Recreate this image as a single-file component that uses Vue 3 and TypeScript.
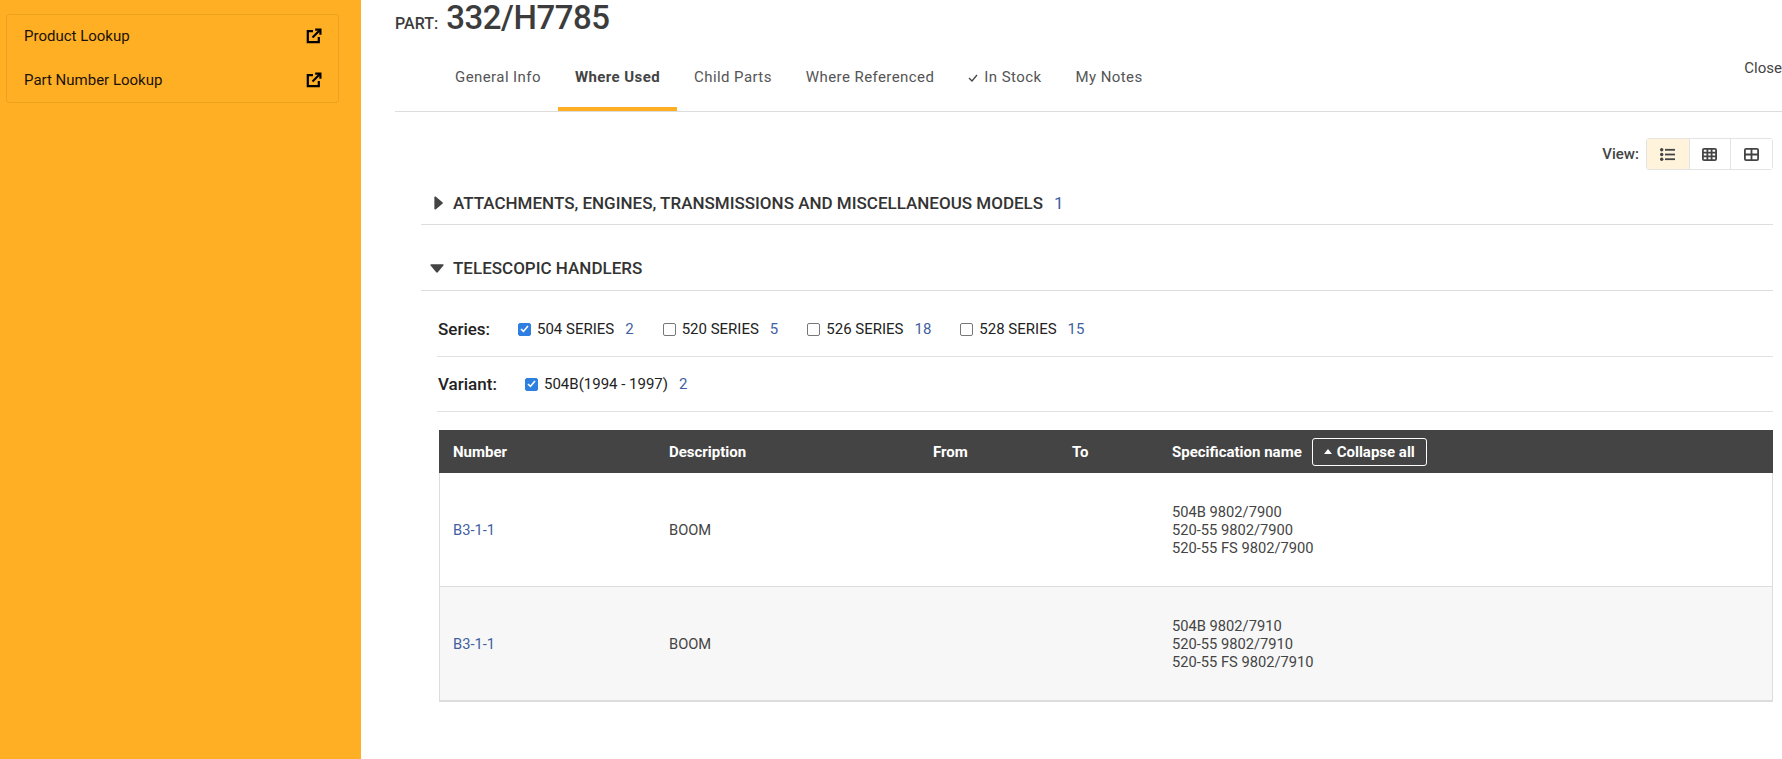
<script setup lang="ts">
interface Filter { label: string; count: number; checked: boolean }
const tabs = ['General Info', 'Where Used', 'Child Parts', 'Where Referenced', 'In Stock', 'My Notes']
const series: Filter[] = [
  { label: '504 SERIES', count: 2, checked: true },
  { label: '520 SERIES', count: 5, checked: false },
  { label: '526 SERIES', count: 18, checked: false },
  { label: '528 SERIES', count: 15, checked: false },
]
const rows = [
  { number: 'B3-1-1', description: 'BOOM', specs: ['504B 9802/7900', '520-55 9802/7900', '520-55 FS 9802/7900'] },
  { number: 'B3-1-1', description: 'BOOM', specs: ['504B 9802/7910', '520-55 9802/7910', '520-55 FS 9802/7910'] },
]
</script>

<template>
  <div class="page">
    <aside class="sidebar">
      <div class="card">
        <div v-for="name in ['Product Lookup', 'Part Number Lookup']" :key="name" class="side-item">
          <span>{{ name }}</span>
          <svg width="16" height="16" viewBox="0 0 16 16" fill="none" stroke="#000" stroke-width="2.2">
            <path d="M7 3.2H1.8v11h11V9" />
            <path d="M6.5 9.5 14 2" />
            <path d="M9.2 1.6h5.2v5.2" />
          </svg>
        </div>
      </div>
    </aside>
    <main class="main">
      <h1 class="title"><span class="part">PART:</span> <span class="number">332/H7785</span></h1>
      <div class="tabs">
        <a v-for="t in tabs" :key="t" class="tab" :class="{ active: t === 'Where Used' }">
          <svg v-if="t === 'In Stock'" class="tick" width="10" height="8" viewBox="0 0 10 8" fill="none" stroke="#444" stroke-width="1.3"><path d="M1 4l3 3 5-6" /></svg>{{ t }}
        </a>
        <span class="close">Close</span>
      </div>
      <div class="view">
        <span class="view-label">View:</span>
        <div class="view-group">
          <button class="view-btn on">
            <svg width="15" height="13" viewBox="0 0 15 13" fill="#444"><circle cx="1.7" cy="1.8" r="1.7" /><circle cx="1.7" cy="6.5" r="1.7" /><circle cx="1.7" cy="11.2" r="1.7" /><rect x="5" y=".9" width="10" height="1.8" /><rect x="5" y="5.6" width="10" height="1.8" /><rect x="5" y="10.3" width="10" height="1.8" /></svg>
          </button>
          <button class="view-btn">
            <svg width="15" height="13" viewBox="0 0 15 13" fill="none" stroke="#444" stroke-width="1.8"><rect x=".9" y=".9" width="13.2" height="11.2" rx="1.2" /><path d="M5.4 1v11M9.6 1v11M1 4.6h13M1 8.4h13" /></svg>
          </button>
          <button class="view-btn">
            <svg width="15" height="13" viewBox="0 0 15 13" fill="none" stroke="#444" stroke-width="1.8"><rect x=".9" y=".9" width="13.2" height="11.2" rx="1.2" /><path d="M7.5 1v11M1 6.5h13" /></svg>
          </button>
        </div>
      </div>
      <div class="content">
        <div class="section first">
          <svg class="caret" width="9" height="14" viewBox="0 0 9 14" fill="#444"><path d="M1.6.6 8.4 6.2q.9.8 0 1.6L1.6 13.4Q.4 14 .4 12.8V1.2Q.4 0 1.6.6z" /></svg>
          <span>ATTACHMENTS, ENGINES, TRANSMISSIONS AND MISCELLANEOUS MODELS</span>
          <span class="count head-count">1</span>
        </div>
        <div class="section second">
          <svg class="caret down" width="14" height="9" viewBox="0 0 14 9" fill="#444"><path d="M1.2.3h11.6q1.3 0 .6 1.2L7.8 8.2q-.8.9-1.6 0L.6 1.5Q-.1.3 1.2.3z" /></svg>
          <span>TELESCOPIC HANDLERS</span>
        </div>
        <div class="inner">
          <div class="filter series">
            <span class="filter-label">Series:</span>
            <label v-for="s in series" :key="s.label" class="option">
              <span class="box" :class="{ checked: s.checked }">
                <svg v-if="s.checked" width="9" height="8" viewBox="0 0 9 8" fill="none" stroke="#fff" stroke-width="1.6"><path d="M1 4l2.4 2.4L8 1" /></svg>
              </span>
              <span>{{ s.label }}</span>
              <span class="count">{{ s.count }}</span>
            </label>
          </div>
          <div class="filter variant">
            <span class="filter-label">Variant:</span>
            <label class="option">
              <span class="box checked">
                <svg width="9" height="8" viewBox="0 0 9 8" fill="none" stroke="#fff" stroke-width="1.6"><path d="M1 4l2.4 2.4L8 1" /></svg>
              </span>
              <span>504B(1994 - 1997)</span>
              <span class="count">2</span>
            </label>
          </div>
          <div class="table">
            <div class="row head">
              <span>Number</span><span>Description</span><span>From</span><span>To</span>
              <span class="spec-head">Specification name
                <button class="collapse"><svg width="8" height="5" viewBox="0 0 8 5" fill="#fff"><path d="M0 5 4 0l4 5z" /></svg>Collapse all</button>
              </span>
            </div>
            <div v-for="(r, i) in rows" :key="i" class="row body" :class="{ alt: i === 1 }">
              <a class="link">{{ r.number }}</a>
              <span>{{ r.description }}</span>
              <span></span><span></span>
              <span class="specs"><span v-for="s in r.specs" :key="s">{{ s }}</span></span>
            </div>
          </div>
        </div>
      </div>
    </main>
  </div>
</template>

<style scoped>
.page { display: flex; width: 1782px; height: 759px; overflow: hidden; font-family: Roboto, sans-serif; font-size: 15px; color: #444; background: #fff; }
.sidebar { width: 361px; flex: none; background: #ffaf24; padding: 14px 22px 0 6px; box-sizing: border-box; }
.card { border: 1px solid #eda21f; border-radius: 3px; height: 89px; box-sizing: border-box; padding: 0 16px 0 17px; }
.side-item { height: 44px; display: flex; align-items: center; justify-content: space-between; color: #1a1208; font-size: 15px; position: relative; top: -1px; }
.main { flex: 1; min-width: 0; padding-left: 34px; box-sizing: border-box; }
.title { margin: 0; height: 34px; line-height: 35px; font-size: 33px; font-weight: 500; color: #3c3c3c; }
.number { letter-spacing: -.5px; }
.part { font-size: 16px; font-weight: 500; }
.tabs { display: flex; height: 70px; margin-top: 8px; padding-left: 43px; border-bottom: 1px solid #ddd; box-sizing: border-box; }
.tab { height: 69px; line-height: 71px; padding: 0 17px; box-sizing: border-box; letter-spacing: .42px; color: #555; white-space: nowrap; }
.tab.active { font-weight: 700; color: #444; border-bottom: 4px solid #ffaf24; }
.tick { margin-right: 6px; }
.close { margin-left: auto; line-height: 52px; }
.view { display: flex; justify-content: flex-end; align-items: center; gap: 7px; margin-top: 26px; padding-right: 9px; }
.view-label { font-weight: 500; color: #444; }
.view-group { display: flex; border: 1px solid #e3e3e3; border-radius: 3px; height: 32px; box-sizing: border-box; }
.view-btn { width: 41.7px; border: 0; border-left: 1px solid #e3e3e3; background: #fff; padding: 0; display: flex; align-items: center; justify-content: center; }
.view-btn:first-child { border-left: 0; }
.view-btn.on { background: #fff3dc; }
.content { margin-left: 26px; margin-right: 9px; }
.section { display: flex; align-items: center; position: relative; padding-left: 32px; height: 43px; border-bottom: 1px solid #ddd; font-size: 17px; font-weight: 500; color: #333; box-sizing: border-box; }
.section.first { margin-top: 12px; }
.section.second { margin-top: 22px; height: 44px; padding-bottom: 2px; }
.caret { position: absolute; left: 13px; top: 14px; }
.caret.down { left: 9px; top: 17px; }
.count { color: #3f5f9f; font-weight: 400; margin-left: 11px; }
.inner { margin-left: 16px; }
.filter { display: flex; align-items: center; height: 24px; border-bottom: 1px solid #e2e2e2; color: #222; }
.series { padding: 26px 0 15px; }
.variant { padding: 15px 0; }
.filter-label { font-size: 17px; font-weight: 500; margin-left: 1px; width: 80px; flex: none; }
.variant .filter-label { width: 87px; }
.option { display: flex; align-items: center; margin-right: 29px; white-space: nowrap; }
.box { width: 13px; height: 13px; border: 1px solid #777; border-radius: 2px; box-sizing: border-box; margin-right: 6px; display: flex; align-items: center; justify-content: center; background: #fff; }
.box.checked { background: #2f7fe0; border-color: #2f7fe0; }
.table { margin: 18px 0 0 2px; border: 1px solid #ddd; border-top: 0; border-bottom-width: 2px; }
.row { display: grid; grid-template-columns: 216px 264px 139px 100px 1fr; padding-left: 13px; align-items: center; }
.head { height: 43px; background: #444; color: #fff; font-weight: 700; margin: 0 -1px; padding-left: 14px; }
.spec-head { display: flex; align-items: center; gap: 10px; white-space: nowrap; }
.collapse { height: 28px; width: 115px; border: 1px solid #fff; border-radius: 3px; background: transparent; color: #fff; font: 700 15px Roboto, sans-serif; padding: 0; display: flex; align-items: center; justify-content: center; gap: 5px; }
.body { height: 114px; border-top: 1px solid #ddd; box-sizing: border-box; color: #444; font-size: 14.7px; }
.head + .body { border-top: 0; height: 113px; }
.alt { background: #f7f7f7; }
.link { color: #3f5f9f; }
.specs { display: flex; flex-direction: column; line-height: 18px; }
</style>
